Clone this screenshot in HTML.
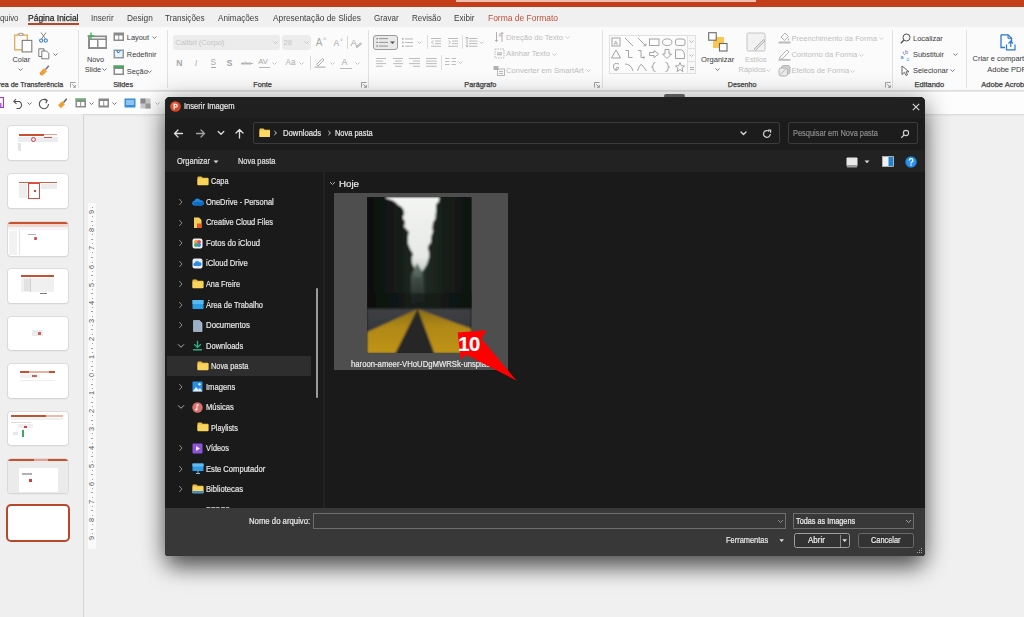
<!DOCTYPE html>
<html><head><meta charset="utf-8"><style>
*{margin:0;padding:0;box-sizing:border-box}
html,body{width:1024px;height:617px;overflow:hidden;background:#f0f0f0;font-family:"Liberation Sans",sans-serif;position:relative}
.a{position:absolute}
.t{position:absolute;white-space:nowrap}
</style></head><body>
<div class="a" style="left:0px;top:0px;width:1024px;height:7px;background:#c43e1c;"></div>
<div class="a" style="left:456px;top:0px;width:300px;height:2px;background:#efc0ae;"></div>
<div class="a" style="left:0px;top:7px;width:1024px;height:20px;background:#f0f0f0;"></div>
<div class="t" id="q0" style="left:0px;top:12.70px;height:10px;line-height:10px;font-size:8.6px;color:#3c3c3c;transform:scaleX(0.8906);transform-origin:0 0;">quivo</div>
<div class="t" id="q1" style="left:28.2px;top:12.70px;height:10px;line-height:10px;font-size:8.6px;color:#262626;-webkit-text-stroke:0.25px #262626;transform:scaleX(0.9878);transform-origin:0 0;">Página Inicial</div>
<div class="t" id="q2" style="left:91.4px;top:12.70px;height:10px;line-height:10px;font-size:8.6px;color:#3c3c3c;transform:scaleX(0.9460);transform-origin:0 0;">Inserir</div>
<div class="t" id="q3" style="left:127px;top:12.70px;height:10px;line-height:10px;font-size:8.6px;color:#3c3c3c;transform:scaleX(0.9639);transform-origin:0 0;">Design</div>
<div class="t" id="q4" style="left:165.4px;top:12.70px;height:10px;line-height:10px;font-size:8.6px;color:#3c3c3c;transform:scaleX(0.9492);transform-origin:0 0;">Transições</div>
<div class="t" id="q5" style="left:218px;top:12.70px;height:10px;line-height:10px;font-size:8.6px;color:#3c3c3c;transform:scaleX(0.9526);transform-origin:0 0;">Animações</div>
<div class="t" id="q6" style="left:273px;top:12.70px;height:10px;line-height:10px;font-size:8.6px;color:#3c3c3c;transform:scaleX(0.9694);transform-origin:0 0;">Apresentação de Slides</div>
<div class="t" id="q7" style="left:374.4px;top:12.70px;height:10px;line-height:10px;font-size:8.6px;color:#3c3c3c;transform:scaleX(0.9366);transform-origin:0 0;">Gravar</div>
<div class="t" id="q8" style="left:412px;top:12.70px;height:10px;line-height:10px;font-size:8.6px;color:#3c3c3c;transform:scaleX(0.9336);transform-origin:0 0;">Revisão</div>
<div class="t" id="q9" style="left:453.7px;top:12.70px;height:10px;line-height:10px;font-size:8.6px;color:#3c3c3c;transform:scaleX(0.9535);transform-origin:0 0;">Exibir</div>
<div class="t" id="q10" style="left:488.2px;top:12.70px;height:10px;line-height:10px;font-size:8.6px;color:#c0503e;transform:scaleX(0.9835);transform-origin:0 0;">Forma de Formato</div>
<div class="a" style="left:27.6px;top:23.2px;width:51.5px;height:1.8px;background:#b8472c;"></div>
<div class="a" style="left:0px;top:27px;width:1024px;height:63px;background:#fbfbfb;"></div>
<div class="a" style="left:0px;top:89.5px;width:1024px;height:2.5px;background:linear-gradient(#d6d6d6,#ededed);"></div>
<div class="a" style="left:0px;top:92px;width:1024px;height:22px;background:#fdfdfd;"></div>
<div class="a" style="left:0px;top:114px;width:1024px;height:1px;background:#dcdcdc;"></div>
<div class="a" style="left:0px;top:115px;width:1024px;height:2px;background:linear-gradient(#e8e8e8,#efefef);"></div>
<div class="a" style="left:77.8px;top:30px;width:1px;height:58px;background:#e1e1e1;"></div>
<div class="a" style="left:167.1px;top:30px;width:1px;height:58px;background:#e1e1e1;"></div>
<div class="a" style="left:368px;top:30px;width:1px;height:58px;background:#e1e1e1;"></div>
<div class="a" style="left:601.8px;top:30px;width:1px;height:58px;background:#e1e1e1;"></div>
<div class="a" style="left:892px;top:30px;width:1px;height:58px;background:#e1e1e1;"></div>
<div class="a" style="left:965.8px;top:30px;width:1px;height:58px;background:#e1e1e1;"></div>
<svg class="a" style="left:13px;top:32px;" width="20" height="21" viewBox="0 0 20 21"><path d="M1.7 3.2H5V2H10.5V3.2H14.3V17.8H1.7Z" fill="none" stroke="#e0a848" stroke-width="1.2"/><path d="M6.2 1.3h3.2v2.2H6.2Z" fill="#fff" stroke="#8f8f8f" stroke-width="0.8"/><rect x="9.2" y="8.4" width="9.6" height="11.5" fill="#fff" stroke="#7c7c7c" stroke-width="1.1"/></svg>
<div class="t" id="q11" style="left:12.5px;top:55.10px;height:10px;line-height:10px;font-size:7.4px;color:#3a3a3a;">Colar</div>
<svg class="a" style="left:18.0px;top:68.0px;" width="5" height="3" viewBox="0 0 5 3"><path d="M0.5 0.5L2.5 2.5L4.5 0.5" stroke="#6a6a6a" stroke-width="0.9" fill="none"/></svg>
<svg class="a" style="left:39px;top:32px;" width="9" height="11" viewBox="0 0 9 11"><path d="M2 0.5L6.5 7M7 0.5L2.5 7" stroke="#7a7a7a" stroke-width="0.9"/><circle cx="2.2" cy="8.6" r="1.6" fill="none" stroke="#3a86c8" stroke-width="1.1"/><circle cx="6.8" cy="8.6" r="1.6" fill="none" stroke="#3a86c8" stroke-width="1.1"/></svg>
<svg class="a" style="left:37.5px;top:48px;" width="12" height="11.5" viewBox="0 0 12 11.5"><path d="M0.8 0.8H6V8.5H0.8Z" fill="#fff" stroke="#6c6c6c" stroke-width="0.9"/><path d="M3.8 3H8.5L10.8 5.3V10.8H3.8Z" fill="#fff" stroke="#6c6c6c" stroke-width="0.9"/></svg>
<svg class="a" style="left:53.1px;top:52.5px;" width="5" height="3" viewBox="0 0 5 3"><path d="M0.5 0.5L2.5 2.5L4.5 0.5" stroke="#6a6a6a" stroke-width="0.9" fill="none"/></svg>
<svg class="a" style="left:38.5px;top:64.5px;" width="11" height="11" viewBox="0 0 11 11"><path d="M6.5 4.5L9.8 0.8" stroke="#7a6a9a" stroke-width="1.6"/><path d="M1 7.2L5 3.2L8 6.2L4 10.2Z" fill="#f0a030"/><path d="M1 7.2L4 10.2L2.3 10.6L0.6 8.8Z" fill="#d88a20"/></svg>
<div class="t" id="q12" style="left:-1.5px;top:80.10px;height:10px;line-height:10px;font-size:7.05px;color:#404040;-webkit-text-stroke:0.25px #404040;">rea de Transferência</div>
<svg class="a" style="left:69.8px;top:81.5px;" width="6" height="6" viewBox="0 0 6 6"><path d="M0.5 5.5V0.5H5.5" stroke="#8a8a8a" stroke-width="0.8" fill="none"/><path d="M2.2 2.2L5.3 5.3M5.3 3V5.3H3" stroke="#8a8a8a" stroke-width="0.8" fill="none"/></svg>
<svg class="a" style="left:85.5px;top:31.5px;" width="22" height="18" viewBox="0 0 22 18"><rect x="2" y="3.5" width="19" height="13.5" fill="#8c8c8c"/><rect x="4" y="8" width="7" height="7" fill="#fff"/><rect x="12.5" y="8" width="7" height="7" fill="#fff"/><rect x="3.8" y="5" width="15.5" height="1.6" fill="#e8e8e8"/><path d="M5 0.5V7M1.5 3.8H8.5" stroke="#3cae5a" stroke-width="1.3"/></svg>
<div class="t" id="q13" style="left:86.9px;top:54.50px;height:10px;line-height:10px;font-size:7.4px;color:#3a3a3a;">Novo</div>
<div class="t" id="q14" style="left:84.8px;top:64.80px;height:10px;line-height:10px;font-size:7.4px;color:#3a3a3a;">Slide</div>
<svg class="a" style="left:102.0px;top:68.0px;" width="5" height="3" viewBox="0 0 5 3"><path d="M0.5 0.5L2.5 2.5L4.5 0.5" stroke="#6a6a6a" stroke-width="0.9" fill="none"/></svg>
<svg class="a" style="left:113px;top:32px;" width="11.5" height="9.5" viewBox="0 0 11.5 9.5"><rect x="0.5" y="0.5" width="10.5" height="8.5" fill="#8a8a8a"/><rect x="2" y="3.5" width="3.3" height="4" fill="#fff"/><rect x="6.2" y="3.5" width="3.3" height="4" fill="#fff"/></svg>
<div class="t" id="q15" style="left:126.8px;top:33.20px;height:10px;line-height:10px;font-size:7.4px;color:#3a3a3a;">Layout</div>
<svg class="a" style="left:151.5px;top:36.2px;" width="5" height="3" viewBox="0 0 5 3"><path d="M0.5 0.5L2.5 2.5L4.5 0.5" stroke="#6a6a6a" stroke-width="0.9" fill="none"/></svg>
<svg class="a" style="left:113px;top:48.5px;" width="11.5" height="10" viewBox="0 0 11.5 10"><rect x="0.5" y="0.5" width="10.5" height="9" fill="#8f9aa4"/><rect x="2" y="2" width="7.5" height="6" fill="#e8f0f8"/><path d="M3.5 1L5 4L7.5 2" stroke="#2a7ac8" stroke-width="1" fill="none"/></svg>
<div class="t" id="q16" style="left:126.8px;top:49.80px;height:10px;line-height:10px;font-size:7.4px;color:#3a3a3a;">Redefinir</div>
<svg class="a" style="left:113px;top:65px;" width="11.5" height="10.5" viewBox="0 0 11.5 10.5"><rect x="0.5" y="0.5" width="10.5" height="9.5" fill="#8a8a8a"/><rect x="0.5" y="0.5" width="10.5" height="2.5" fill="#4aa860"/><rect x="2" y="4" width="7.5" height="4.5" fill="#fff"/></svg>
<div class="t" id="q17" style="left:126.8px;top:66.50px;height:10px;line-height:10px;font-size:7.4px;color:#3a3a3a;">Seção</div>
<svg class="a" style="left:147.0px;top:69.5px;" width="5" height="3" viewBox="0 0 5 3"><path d="M0.5 0.5L2.5 2.5L4.5 0.5" stroke="#6a6a6a" stroke-width="0.9" fill="none"/></svg>
<div class="t" id="q18" style="left:113.2px;top:80.10px;height:10px;line-height:10px;font-size:7.3px;color:#404040;-webkit-text-stroke:0.25px #404040;">Slides</div>
<div class="a" style="left:172.8px;top:34.8px;width:107px;height:14.8px;background:#ececec;border-radius:3px"></div>
<div class="t" id="q19" style="left:175.3px;top:37.90px;height:10px;line-height:10px;font-size:7.55px;color:#c4c4c4;">Calibri (Corpo)</div>
<svg class="a" style="left:273.2px;top:40.9px;" width="5" height="3" viewBox="0 0 5 3"><path d="M0.5 0.5L2.5 2.5L4.5 0.5" stroke="#c0c0c0" stroke-width="0.9" fill="none"/></svg>
<div class="a" style="left:282.3px;top:34.8px;width:28.7px;height:14.8px;background:#ececec;border-radius:3px"></div>
<div class="t" id="q20" style="left:283.5px;top:37.90px;height:10px;line-height:10px;font-size:7.5px;color:#c4c4c4;">28</div>
<svg class="a" style="left:304.0px;top:40.9px;" width="5" height="3" viewBox="0 0 5 3"><path d="M0.5 0.5L2.5 2.5L4.5 0.5" stroke="#c0c0c0" stroke-width="0.9" fill="none"/></svg>
<div class="t" id="q21" style="left:315.7px;top:37.50px;height:10px;line-height:10px;font-size:10px;color:#a8a8a8;">A</div>
<div class="t" id="q22" style="left:323px;top:34.00px;height:10px;line-height:10px;font-size:6px;color:#a8a8a8;">˄</div>
<div class="t" id="q23" style="left:333.6px;top:38.10px;height:10px;line-height:10px;font-size:8.5px;color:#a8a8a8;">A</div>
<div class="t" id="q24" style="left:340px;top:34.80px;height:10px;line-height:10px;font-size:5px;color:#a8a8a8;">˅</div>
<div class="a" style="left:346.5px;top:36px;width:1px;height:12.5px;background:#d8d8d8;"></div>
<div class="t" id="q25" style="left:350.6px;top:37.80px;height:10px;line-height:10px;font-size:9.5px;color:#a8a8a8;">A</div>
<svg class="a" style="left:355px;top:42px;" width="7" height="6" viewBox="0 0 7 6"><path d="M1 5L5.5 0.8L6.5 2L2.2 5.5Z" fill="#d8d8d8" stroke="#a8a8a8" stroke-width="0.8"/></svg>
<div class="t" id="q26" style="left:176.3px;top:58.40px;height:10px;line-height:10px;font-size:8.6px;color:#a6a6a6;font-weight:bold">N</div>
<div class="t" id="q27" style="left:194.7px;top:58.40px;height:10px;line-height:10px;font-size:8.6px;color:#b0b0b0;font-style:italic">I</div>
<div class="t" id="q28" style="left:210.5px;top:58.00px;height:10px;line-height:10px;font-size:8.2px;color:#a8a8a8;">S</div>
<div class="a" style="left:210.5px;top:67.2px;width:5.5px;height:0.8px;background:#a8a8a8;"></div>
<div class="t" id="q29" style="left:226.5px;top:58.40px;height:10px;line-height:10px;font-size:8.8px;color:#a0a0a0;font-weight:bold">S</div>
<div class="t" id="q30" style="left:241.3px;top:58.40px;height:10px;line-height:10px;font-size:6px;color:#b4b4b4;">abc</div>
<div class="a" style="left:241px;top:62.8px;width:11.5px;height:0.9px;background:#b4b4b4;"></div>
<div class="t" id="q31" style="left:258.3px;top:57.00px;height:10px;line-height:10px;font-size:7.6px;color:#a8a8a8;">AV</div>
<div class="a" style="left:258.5px;top:66.5px;width:11px;height:0.7px;background:#b8b8b8;"></div>
<svg class="a" style="left:272.2px;top:61.5px;" width="5" height="3" viewBox="0 0 5 3"><path d="M0.5 0.5L2.5 2.5L4.5 0.5" stroke="#bdbdbd" stroke-width="0.9" fill="none"/></svg>
<div class="t" id="q32" style="left:285.6px;top:58.40px;height:10px;line-height:10px;font-size:8.2px;color:#adadad;">Aa</div>
<svg class="a" style="left:298.9px;top:61.5px;" width="5" height="3" viewBox="0 0 5 3"><path d="M0.5 0.5L2.5 2.5L4.5 0.5" stroke="#bdbdbd" stroke-width="0.9" fill="none"/></svg>
<div class="a" style="left:310.2px;top:56px;width:1px;height:14px;background:#d8d8d8;"></div>
<svg class="a" style="left:314.3px;top:57px;" width="12" height="11" viewBox="0 0 12 11"><path d="M2.5 7.5L8.5 1.5L10 3L4 9Z" fill="none" stroke="#a0a0a0" stroke-width="0.9"/><rect x="0.5" y="9.5" width="11" height="1.3" fill="#b8b8b8"/></svg>
<svg class="a" style="left:329.6px;top:61.5px;" width="5" height="3" viewBox="0 0 5 3"><path d="M0.5 0.5L2.5 2.5L4.5 0.5" stroke="#bdbdbd" stroke-width="0.9" fill="none"/></svg>
<div class="t" id="q33" style="left:341.5px;top:57.30px;height:10px;line-height:10px;font-size:8.8px;color:#a6a6a6;">A</div>
<div class="a" style="left:340.3px;top:67.8px;width:11.3px;height:1.6px;background:#b8b8b8;"></div>
<svg class="a" style="left:355.3px;top:61.5px;" width="5" height="3" viewBox="0 0 5 3"><path d="M0.5 0.5L2.5 2.5L4.5 0.5" stroke="#bdbdbd" stroke-width="0.9" fill="none"/></svg>
<div class="t" id="q34" style="left:253.2px;top:80.40px;height:10px;line-height:10px;font-size:7.3px;color:#404040;-webkit-text-stroke:0.25px #404040;">Fonte</div>
<svg class="a" style="left:360.9px;top:81.8px;" width="6" height="6" viewBox="0 0 6 6"><path d="M0.5 5.5V0.5H5.5" stroke="#8a8a8a" stroke-width="0.8" fill="none"/><path d="M2.2 2.2L5.3 5.3M5.3 3V5.3H3" stroke="#8a8a8a" stroke-width="0.8" fill="none"/></svg>
<div class="a" style="left:373.4px;top:34.6px;width:25.1px;height:15.5px;background:#e9e9e9;border:1.3px solid #9c9c9c;border-radius:3px"></div>
<svg class="a" style="left:376px;top:37px;" width="20" height="11" viewBox="0 0 20 11"><g fill="#707070"><rect x="0.5" y="1" width="1.3" height="1.3"/><rect x="0.5" y="4.7" width="1.3" height="1.3"/><rect x="0.5" y="8.4" width="1.3" height="1.3"/></g><g fill="#8a8a8a"><rect x="3" y="1.2" width="9" height="0.9"/><rect x="3" y="4.9" width="9" height="0.9"/><rect x="3" y="8.6" width="9" height="0.9"/></g><path d="M14 4.5H19L16.5 7Z" fill="#505050"/></svg>
<svg class="a" style="left:402px;top:36.5px;" width="11" height="11" viewBox="0 0 11 11"><g fill="#b0b0b0"><rect x="0" y="1" width="1.5" height="1.8"/><rect x="0" y="4.6" width="1.5" height="1.8"/><rect x="0" y="8.2" width="1.5" height="1.8"/><rect x="3" y="1.5" width="8" height="0.9"/><rect x="3" y="5.1" width="8" height="0.9"/><rect x="3" y="8.7" width="8" height="0.9"/></g></svg>
<svg class="a" style="left:417.0px;top:40.5px;" width="5" height="3" viewBox="0 0 5 3"><path d="M0.5 0.5L2.5 2.5L4.5 0.5" stroke="#bdbdbd" stroke-width="0.9" fill="none"/></svg>
<div class="a" style="left:426.7px;top:35px;width:1px;height:14px;background:#dcdcdc;"></div>
<svg class="a" style="left:430.8px;top:36.5px;" width="10.5" height="11" viewBox="0 0 10.5 11"><rect x="0" y="1.0" width="10.5" height="0.9" fill="#b5b5b5"/><rect x="4" y="3.6" width="6.5" height="0.9" fill="#b5b5b5"/><rect x="4" y="6.2" width="6.5" height="0.9" fill="#b5b5b5"/><rect x="0" y="8.8" width="10.5" height="0.9" fill="#b5b5b5"/></svg>
<svg class="a" style="left:430.8px;top:39.5px;" width="3" height="5" viewBox="0 0 3 5"><path d="M2.5 0.5L0.5 2.3L2.5 4" stroke="#a8a8a8" stroke-width="0.8" fill="none"/></svg>
<svg class="a" style="left:447.5px;top:36.5px;" width="10.5" height="11" viewBox="0 0 10.5 11"><rect x="0" y="1.0" width="10.5" height="0.9" fill="#b5b5b5"/><rect x="4" y="3.6" width="6.5" height="0.9" fill="#b5b5b5"/><rect x="4" y="6.2" width="6.5" height="0.9" fill="#b5b5b5"/><rect x="0" y="8.8" width="10.5" height="0.9" fill="#b5b5b5"/></svg>
<svg class="a" style="left:447.5px;top:39.5px;" width="3" height="5" viewBox="0 0 3 5"><path d="M0.5 0.5L2.5 2.3L0.5 4" stroke="#a8a8a8" stroke-width="0.8" fill="none"/></svg>
<div class="a" style="left:461.9px;top:35px;width:1px;height:14px;background:#dcdcdc;"></div>
<svg class="a" style="left:469px;top:36.5px;" width="8.5" height="11" viewBox="0 0 8.5 11"><rect x="0" y="1.0" width="8.5" height="0.9" fill="#b5b5b5"/><rect x="0" y="3.6" width="8.5" height="0.9" fill="#b5b5b5"/><rect x="0" y="6.2" width="8.5" height="0.9" fill="#b5b5b5"/><rect x="0" y="8.8" width="8.5" height="0.9" fill="#b5b5b5"/></svg>
<svg class="a" style="left:465px;top:36px;" width="4" height="12" viewBox="0 0 4 12"><path d="M2 1V11M0.5 2.5L2 1L3.5 2.5M0.5 9.5L2 11L3.5 9.5" stroke="#a8a8a8" stroke-width="0.8" fill="none"/></svg>
<svg class="a" style="left:479.2px;top:40.5px;" width="5" height="3" viewBox="0 0 5 3"><path d="M0.5 0.5L2.5 2.5L4.5 0.5" stroke="#bdbdbd" stroke-width="0.9" fill="none"/></svg>
<svg class="a" style="left:375.8px;top:56.8px;" width="10.7" height="11" viewBox="0 0 10.7 11"><rect x="0" y="1.0" width="10.7" height="0.9" fill="#b5b5b5"/><rect x="0" y="3.6" width="7" height="0.9" fill="#b5b5b5"/><rect x="0" y="6.2" width="10.7" height="0.9" fill="#b5b5b5"/><rect x="0" y="8.8" width="7" height="0.9" fill="#b5b5b5"/></svg>
<svg class="a" style="left:392.5px;top:56.8px;" width="10.8" height="11" viewBox="0 0 10.8 11"><rect x="0" y="1.0" width="10.8" height="0.9" fill="#b5b5b5"/><rect x="2" y="3.6" width="6.800000000000001" height="0.9" fill="#b5b5b5"/><rect x="0" y="6.2" width="10.8" height="0.9" fill="#b5b5b5"/><rect x="2" y="8.8" width="6.800000000000001" height="0.9" fill="#b5b5b5"/></svg>
<svg class="a" style="left:409.3px;top:56.8px;" width="11.2" height="11" viewBox="0 0 11.2 11"><rect x="0" y="1.0" width="11.2" height="0.9" fill="#b5b5b5"/><rect x="4" y="3.6" width="7.199999999999999" height="0.9" fill="#b5b5b5"/><rect x="0" y="6.2" width="11.2" height="0.9" fill="#b5b5b5"/><rect x="4" y="8.8" width="7.199999999999999" height="0.9" fill="#b5b5b5"/></svg>
<svg class="a" style="left:426px;top:56.8px;" width="10.8" height="11" viewBox="0 0 10.8 11"><rect x="0" y="1.0" width="10.8" height="0.9" fill="#b5b5b5"/><rect x="0" y="3.6" width="10.8" height="0.9" fill="#b5b5b5"/><rect x="0" y="6.2" width="10.8" height="0.9" fill="#b5b5b5"/><rect x="0" y="8.8" width="10.8" height="0.9" fill="#b5b5b5"/></svg>
<div class="a" style="left:441px;top:55px;width:1px;height:15px;background:#dcdcdc;"></div>
<svg class="a" style="left:445px;top:57px;" width="11" height="10" viewBox="0 0 11 10"><g fill="#b8b8b8"><rect x="0" y="1" width="4.5" height="0.9"/><rect x="0" y="4" width="4.5" height="0.9"/><rect x="0" y="7" width="4.5" height="0.9"/><rect x="6.5" y="1" width="4.5" height="0.9"/><rect x="6.5" y="4" width="4.5" height="0.9"/><rect x="6.5" y="7" width="4.5" height="0.9"/></g></svg>
<svg class="a" style="left:458.2px;top:60.5px;" width="5" height="3" viewBox="0 0 5 3"><path d="M0.5 0.5L2.5 2.5L4.5 0.5" stroke="#bdbdbd" stroke-width="0.9" fill="none"/></svg>
<svg class="a" style="left:493.5px;top:31px;" width="11" height="12" viewBox="0 0 11 12"><path d="M2.5 1V10.5M1 9L2.5 10.5L4 9" stroke="#a8a8a8" stroke-width="0.9" fill="none"/><path d="M8 11V1.5M6.5 3L8 1.5L9.5 3" stroke="#a8a8a8" stroke-width="0.9" fill="none"/><text x="4.6" y="6" font-size="5" fill="#a8a8a8" font-family="Liberation Sans">A</text></svg>
<div class="t" id="q35" style="left:506.1px;top:32.50px;height:10px;line-height:10px;font-size:7.6px;color:#bcbcbc;">Direção do Texto</div>
<svg class="a" style="left:564.5px;top:35.8px;" width="5" height="3" viewBox="0 0 5 3"><path d="M0.5 0.5L2.5 2.5L4.5 0.5" stroke="#c4c4c4" stroke-width="0.9" fill="none"/></svg>
<svg class="a" style="left:494px;top:48px;" width="11" height="11" viewBox="0 0 11 11"><rect x="1" y="1" width="9" height="9" fill="none" stroke="#a8a8a8" stroke-width="0.8" stroke-dasharray="1.5 1"/><rect x="3" y="4.5" width="5" height="0.9" fill="#a0a0a0"/><rect x="3" y="6.3" width="5" height="0.9" fill="#a0a0a0"/></svg>
<div class="t" id="q36" style="left:506.1px;top:49.20px;height:10px;line-height:10px;font-size:7.6px;color:#bcbcbc;">Alinhar Texto</div>
<svg class="a" style="left:551.5px;top:52.5px;" width="5" height="3" viewBox="0 0 5 3"><path d="M0.5 0.5L2.5 2.5L4.5 0.5" stroke="#c4c4c4" stroke-width="0.9" fill="none"/></svg>
<svg class="a" style="left:493px;top:64.5px;" width="12" height="11" viewBox="0 0 12 11"><rect x="0.5" y="1" width="5" height="4" fill="#b0b0b0"/><rect x="4.5" y="4" width="7" height="6.5" fill="none" stroke="#a8a8a8" stroke-width="0.8"/><rect x="6" y="6" width="4" height="0.8" fill="#a8a8a8"/><rect x="6" y="8" width="4" height="0.8" fill="#a8a8a8"/></svg>
<div class="t" id="q37" style="left:506.1px;top:66.00px;height:10px;line-height:10px;font-size:7.55px;color:#bcbcbc;">Converter em SmartArt</div>
<svg class="a" style="left:586.2px;top:69.3px;" width="5" height="3" viewBox="0 0 5 3"><path d="M0.5 0.5L2.5 2.5L4.5 0.5" stroke="#c4c4c4" stroke-width="0.9" fill="none"/></svg>
<div class="t" id="q38" style="left:464.3px;top:79.80px;height:10px;line-height:10px;font-size:7.3px;color:#404040;-webkit-text-stroke:0.25px #404040;">Parágrafo</div>
<svg class="a" style="left:593.5px;top:81.5px;" width="6" height="6" viewBox="0 0 6 6"><path d="M0.5 5.5V0.5H5.5" stroke="#8a8a8a" stroke-width="0.8" fill="none"/><path d="M2.2 2.2L5.3 5.3M5.3 3V5.3H3" stroke="#8a8a8a" stroke-width="0.8" fill="none"/></svg>
<div class="a" style="left:608.6px;top:34.7px;width:87.6px;height:39.7px;background:#fcfcfc;border:1px solid #e0e0e0"></div>
<div class="a" style="left:687px;top:34.7px;width:9.2px;height:39.7px;background:#f8f8f8;border:1px solid #e0e0e0"></div>
<div class="a" style="left:687px;top:47.9px;width:9.2px;height:1px;background:#e0e0e0;"></div>
<div class="a" style="left:687px;top:61.2px;width:9.2px;height:1px;background:#e0e0e0;"></div>
<svg class="a" style="left:689.1px;top:40.0px;" width="5" height="3" viewBox="0 0 5 3"><path d="M0.5 0.5L2.5 2.5L4.5 0.5" stroke="#b0b0b0" stroke-width="0.9" fill="none"/></svg>
<svg class="a" style="left:689.1px;top:53.5px;" width="5" height="3" viewBox="0 0 5 3"><path d="M0.5 0.5L2.5 2.5L4.5 0.5" stroke="#b0b0b0" stroke-width="0.9" fill="none"/></svg>
<div class="a" style="left:689.5px;top:66.5px;width:4.2px;height:0.8px;background:#b0b0b0;"></div>
<div class="a" style="left:689.5px;top:68.5px;width:4.2px;height:0.8px;background:#b0b0b0;"></div>
<svg class="a" style="left:611.0px;top:36.5px;" width="10.5" height="10.5" viewBox="0 0 10.5 10.5"><rect x="1" y="1" width="8" height="8" stroke="#9a9a9a" stroke-width="0.9" fill="none"/><text x="2.8" y="7.5" font-size="6" fill="#8a8a8a" font-family="Liberation Sans">A</text></svg>
<svg class="a" style="left:623.8px;top:36.5px;" width="10.5" height="10.5" viewBox="0 0 10.5 10.5"><path d="M1 1L9 9" stroke="#9a9a9a" stroke-width="0.9" fill="none"/></svg>
<svg class="a" style="left:636.6px;top:36.5px;" width="10.5" height="10.5" viewBox="0 0 10.5 10.5"><path d="M1 1L8.5 8.5" stroke="#9a9a9a" stroke-width="0.9" fill="none"/><path d="M6.5 8.8H8.8V6.5" stroke="#9a9a9a" stroke-width="0.9" fill="none"/></svg>
<svg class="a" style="left:649.4px;top:36.5px;" width="10.5" height="10.5" viewBox="0 0 10.5 10.5"><rect x="0.5" y="2" width="9.5" height="6.5" stroke="#9a9a9a" stroke-width="0.9" fill="none"/></svg>
<svg class="a" style="left:662.2px;top:36.5px;" width="10.5" height="10.5" viewBox="0 0 10.5 10.5"><ellipse cx="5.2" cy="5.2" rx="4.7" ry="3.3" stroke="#9a9a9a" stroke-width="0.9" fill="none"/></svg>
<svg class="a" style="left:675.0px;top:36.5px;" width="10.5" height="10.5" viewBox="0 0 10.5 10.5"><rect x="0.5" y="2" width="9.5" height="6.5" rx="2" stroke="#9a9a9a" stroke-width="0.9" fill="none"/></svg>
<svg class="a" style="left:611.0px;top:49.1px;" width="10.5" height="10.5" viewBox="0 0 10.5 10.5"><path d="M5 1L9.5 9H0.5Z" stroke="#9a9a9a" stroke-width="0.9" fill="none"/></svg>
<svg class="a" style="left:623.8px;top:49.1px;" width="10.5" height="10.5" viewBox="0 0 10.5 10.5"><path d="M1.5 1.5H4.5V8.5H8.5" stroke="#9a9a9a" stroke-width="0.9" fill="none"/></svg>
<svg class="a" style="left:636.6px;top:49.1px;" width="10.5" height="10.5" viewBox="0 0 10.5 10.5"><path d="M1 1.5H4V8.5H7.5M6.5 7.3L7.8 8.5L6.5 9.7" stroke="#9a9a9a" stroke-width="0.9" fill="none"/></svg>
<svg class="a" style="left:649.4px;top:49.1px;" width="10.5" height="10.5" viewBox="0 0 10.5 10.5"><path d="M0.5 3.5H5V1.5L9.5 5L5 8.5V6.5H0.5Z" stroke="#9a9a9a" stroke-width="0.9" fill="none"/></svg>
<svg class="a" style="left:662.2px;top:49.1px;" width="10.5" height="10.5" viewBox="0 0 10.5 10.5"><path d="M3 0.5H7V5H9.5L5 9.5L0.5 5H3Z" stroke="#9a9a9a" stroke-width="0.9" fill="none"/></svg>
<svg class="a" style="left:675.0px;top:49.1px;" width="10.5" height="10.5" viewBox="0 0 10.5 10.5"><path d="M0.5 0.8H6.5Q10 2 9.5 9.5H0.5Z" stroke="#9a9a9a" stroke-width="0.9" fill="none"/></svg>
<svg class="a" style="left:611.0px;top:61.7px;" width="10.5" height="10.5" viewBox="0 0 10.5 10.5"><path d="M8 2Q2 0 2.5 5Q3 9 6 8Q9 7 7 5Q4 5 5 9" stroke="#9a9a9a" stroke-width="0.9" fill="none"/></svg>
<svg class="a" style="left:623.8px;top:61.7px;" width="10.5" height="10.5" viewBox="0 0 10.5 10.5"><path d="M1 2Q7 2 9 9" stroke="#9a9a9a" stroke-width="0.9" fill="none"/></svg>
<svg class="a" style="left:636.6px;top:61.7px;" width="10.5" height="10.5" viewBox="0 0 10.5 10.5"><path d="M0.5 9Q3 1 5 3Q7 5 9.5 9" stroke="#9a9a9a" stroke-width="0.9" fill="none"/></svg>
<svg class="a" style="left:649.4px;top:61.7px;" width="10.5" height="10.5" viewBox="0 0 10.5 10.5"><path d="M6.5 0.5Q4 0.5 4 3V4Q4 5 2.5 5Q4 5 4 6V7Q4 9.5 6.5 9.5" stroke="#9a9a9a" stroke-width="0.9" fill="none"/></svg>
<svg class="a" style="left:662.2px;top:61.7px;" width="10.5" height="10.5" viewBox="0 0 10.5 10.5"><path d="M3.5 0.5Q6 0.5 6 3V4Q6 5 7.5 5Q6 5 6 6V7Q6 9.5 3.5 9.5" stroke="#9a9a9a" stroke-width="0.9" fill="none"/></svg>
<svg class="a" style="left:675.0px;top:61.7px;" width="10.5" height="10.5" viewBox="0 0 10.5 10.5"><path d="M5 0.5L6.3 3.7L9.7 3.9L7.1 6.1L8 9.5L5 7.6L2 9.5L2.9 6.1L0.3 3.9L3.7 3.7Z" stroke="#9a9a9a" stroke-width="0.9" fill="none"/></svg>
<svg class="a" style="left:708px;top:32px;" width="20" height="20" viewBox="0 0 20 20"><rect x="5" y="5" width="11" height="11" fill="#f8c850"/><rect x="0.7" y="0.7" width="7.5" height="7.5" fill="#fff" stroke="#6a6a6a" stroke-width="1.1"/><rect x="11.5" y="11.5" width="7.5" height="7.5" fill="#fff" stroke="#6a6a6a" stroke-width="1.1"/></svg>
<div class="t" id="q39" style="left:701px;top:54.50px;height:10px;line-height:10px;font-size:7.6px;color:#3a3a3a;">Organizar</div>
<svg class="a" style="left:715.0px;top:67.7px;" width="5" height="3" viewBox="0 0 5 3"><path d="M0.5 0.5L2.5 2.5L4.5 0.5" stroke="#6a6a6a" stroke-width="0.9" fill="none"/></svg>
<svg class="a" style="left:745.5px;top:32px;" width="21" height="21" viewBox="0 0 21 21"><rect x="1" y="1" width="18" height="18" rx="1.5" fill="#f2f2f2" stroke="#c4c4c4" stroke-width="1"/><path d="M8 17L17.5 7.5L19 9L9.5 18.5Z" fill="#ddd" stroke="#aaa" stroke-width="0.8"/></svg>
<div class="t" id="q40" style="left:745px;top:54.90px;height:10px;line-height:10px;font-size:7.4px;color:#c0c0c0;">Estilos</div>
<div class="t" id="q41" style="left:738.6px;top:65.20px;height:10px;line-height:10px;font-size:7.4px;color:#c0c0c0;">Rápidos</div>
<svg class="a" style="left:766.0px;top:68.5px;" width="5" height="3" viewBox="0 0 5 3"><path d="M0.5 0.5L2.5 2.5L4.5 0.5" stroke="#c8c8c8" stroke-width="0.9" fill="none"/></svg>
<svg class="a" style="left:778px;top:31px;" width="13" height="13" viewBox="0 0 13 13"><path d="M3 6L7 2L10.5 5.5L6.5 9.5Z" fill="none" stroke="#a8a8a8" stroke-width="0.9"/><path d="M10.5 7Q12 9 10.5 9.5Q9 9 10.5 7Z" fill="#b8b8b8"/><rect x="0.5" y="10.5" width="12" height="2" fill="#bcbcbc"/></svg>
<div class="t" id="q42" style="left:791.4px;top:33.60px;height:10px;line-height:10px;font-size:7.6px;color:#bfbfbf;">Preenchimento da Forma</div>
<svg class="a" style="left:878.5px;top:36.8px;" width="5" height="3" viewBox="0 0 5 3"><path d="M0.5 0.5L2.5 2.5L4.5 0.5" stroke="#c8c8c8" stroke-width="0.9" fill="none"/></svg>
<svg class="a" style="left:778px;top:48px;" width="13" height="13" viewBox="0 0 13 13"><path d="M2 9L9 2L11 4L4 11L1.5 11.5Z" fill="none" stroke="#a8a8a8" stroke-width="0.9"/><rect x="0.5" y="11" width="12" height="1.8" fill="#bcbcbc"/></svg>
<div class="t" id="q43" style="left:791.4px;top:50.30px;height:10px;line-height:10px;font-size:7.6px;color:#bfbfbf;">Contorno da Forma</div>
<svg class="a" style="left:858.5px;top:53.5px;" width="5" height="3" viewBox="0 0 5 3"><path d="M0.5 0.5L2.5 2.5L4.5 0.5" stroke="#c8c8c8" stroke-width="0.9" fill="none"/></svg>
<svg class="a" style="left:778px;top:64px;" width="13" height="13" viewBox="0 0 13 13"><rect x="3.5" y="1.5" width="8.5" height="8.5" rx="2" fill="#d0d0d0" stroke="#a8a8a8" stroke-width="0.8"/><rect x="1" y="4" width="8.5" height="8" rx="2" fill="#eaeaea" stroke="#a8a8a8" stroke-width="0.8"/><path d="M2.5 10L8 5" stroke="#a8a8a8" stroke-width="0.8"/></svg>
<div class="t" id="q44" style="left:791.4px;top:66.20px;height:10px;line-height:10px;font-size:7.6px;color:#bfbfbf;">Efeitos de Forma</div>
<svg class="a" style="left:849.5px;top:69.5px;" width="5" height="3" viewBox="0 0 5 3"><path d="M0.5 0.5L2.5 2.5L4.5 0.5" stroke="#c8c8c8" stroke-width="0.9" fill="none"/></svg>
<div class="t" id="q45" style="left:727.8px;top:80.20px;height:10px;line-height:10px;font-size:7.15px;color:#404040;-webkit-text-stroke:0.25px #404040;">Desenho</div>
<svg class="a" style="left:884.8px;top:81.5px;" width="6" height="6" viewBox="0 0 6 6"><path d="M0.5 5.5V0.5H5.5" stroke="#8a8a8a" stroke-width="0.8" fill="none"/><path d="M2.2 2.2L5.3 5.3M5.3 3V5.3H3" stroke="#8a8a8a" stroke-width="0.8" fill="none"/></svg>
<svg class="a" style="left:900px;top:32.5px;" width="11" height="11" viewBox="0 0 11 11"><circle cx="6.5" cy="4.5" r="3.5" fill="none" stroke="#505050" stroke-width="1"/><path d="M4 7L0.8 10.2" stroke="#505050" stroke-width="1.3"/></svg>
<div class="t" id="q46" style="left:913px;top:33.50px;height:10px;line-height:10px;font-size:7.45px;color:#3a3a3a;">Localizar</div>
<svg class="a" style="left:900px;top:48.5px;" width="12" height="12" viewBox="0 0 12 12"><text x="5" y="5" font-size="5.5" fill="#8a4ab8" font-family="Liberation Sans">b</text><text x="0.5" y="9.5" font-size="5.5" fill="#2a7ac8" font-family="Liberation Sans">a</text><text x="6.5" y="11.5" font-size="5.5" fill="#2a9ad8" font-family="Liberation Sans">c</text><path d="M3 2.5Q3 5 5 6" stroke="#3a8ad0" stroke-width="0.7" fill="none"/></svg>
<div class="t" id="q47" style="left:913px;top:50.30px;height:10px;line-height:10px;font-size:7.45px;color:#3a3a3a;">Substituir</div>
<svg class="a" style="left:952.5px;top:53.3px;" width="5" height="3" viewBox="0 0 5 3"><path d="M0.5 0.5L2.5 2.5L4.5 0.5" stroke="#6a6a6a" stroke-width="0.9" fill="none"/></svg>
<svg class="a" style="left:901px;top:65px;" width="9" height="11" viewBox="0 0 9 11"><path d="M1 1V9.5L3.3 7.3L5 10.5L6.5 9.8L5 6.8H8Z" fill="#fff" stroke="#555" stroke-width="0.9" stroke-linejoin="round"/></svg>
<div class="t" id="q48" style="left:913px;top:66.20px;height:10px;line-height:10px;font-size:7.45px;color:#3a3a3a;">Selecionar</div>
<svg class="a" style="left:949.5px;top:69.2px;" width="5" height="3" viewBox="0 0 5 3"><path d="M0.5 0.5L2.5 2.5L4.5 0.5" stroke="#6a6a6a" stroke-width="0.9" fill="none"/></svg>
<div class="t" id="q49" style="left:914.6px;top:79.60px;height:10px;line-height:10px;font-size:7.5px;color:#404040;-webkit-text-stroke:0.25px #404040;">Editando</div>
<svg class="a" style="left:998.5px;top:34px;" width="18" height="17" viewBox="0 0 18 17"><path d="M2 0.8H9L12.5 4.3V8" fill="none" stroke="#2a78d6" stroke-width="1.3"/><path d="M2 0.8V13.5H6" fill="none" stroke="#2a78d6" stroke-width="1.3"/><path d="M9 0.8V4.3H12.5" fill="none" stroke="#2a78d6" stroke-width="1"/><path d="M7.5 10.5V15.8H16V10.5" fill="none" stroke="#2a78d6" stroke-width="1.2"/><path d="M11.75 13V7.5M9.5 9.5L11.75 7.2L14 9.5" fill="none" stroke="#2a78d6" stroke-width="1.2"/></svg>
<div class="t" id="q50" style="left:972.5px;top:54.30px;height:10px;line-height:10px;font-size:7.5px;color:#3a3a3a;">Criar e compartilhar</div>
<div class="t" id="q51" style="left:987.3px;top:64.60px;height:10px;line-height:10px;font-size:7.5px;color:#3a3a3a;">Adobe PDF</div>
<div class="t" id="q52" style="left:981.3px;top:79.60px;height:10px;line-height:10px;font-size:7.5px;color:#404040;-webkit-text-stroke:0.25px #404040;">Adobe Acrobat</div>
<svg class="a" style="left:-6px;top:97px;" width="10" height="11" viewBox="0 0 10 11"><rect x="0.5" y="0.5" width="9" height="10" fill="none" stroke="#9a3ad0" stroke-width="1.2"/><rect x="2.5" y="6" width="5" height="4" fill="#b060e0"/></svg>
<svg class="a" style="left:13px;top:97.5px;" width="12" height="11" viewBox="0 0 12 11"><path d="M3 1L0.8 3.5L3.5 5.8" stroke="#505050" stroke-width="1.1" fill="none"/><path d="M1 3.5H6.5A4 4 0 0 1 6.5 10.5H3.5" stroke="#505050" stroke-width="1.1" fill="none"/></svg>
<svg class="a" style="left:26.7px;top:101.9px;" width="5" height="3" viewBox="0 0 5 3"><path d="M0.5 0.5L2.5 2.5L4.5 0.5" stroke="#6a6a6a" stroke-width="0.9" fill="none"/></svg>
<svg class="a" style="left:37.5px;top:97.5px;" width="12" height="12" viewBox="0 0 12 12"><path d="M8.8 2.5A4.6 4.6 0 1 0 10.5 6" stroke="#505050" stroke-width="1.1" fill="none"/><path d="M6.5 0.8L9.2 2.5L7.8 5.2" stroke="#505050" stroke-width="1.1" fill="none"/></svg>
<svg class="a" style="left:57px;top:97.5px;" width="11" height="11" viewBox="0 0 11 11"><path d="M6.5 4.5L9.8 0.8" stroke="#606060" stroke-width="1.5"/><path d="M1 7.2L5 3.2L8 6.2L4 10.2Z" fill="#f0a030"/></svg>
<svg class="a" style="left:75px;top:98px;" width="11.5" height="10" viewBox="0 0 11.5 10"><rect x="0.5" y="0.5" width="10.5" height="9" fill="#8a8a8a"/><rect x="0.5" y="0.5" width="10.5" height="2" fill="#6ab070"/><rect x="2" y="4" width="3.2" height="4" fill="#fff"/><rect x="6.2" y="4" width="3.2" height="4" fill="#fff"/></svg>
<svg class="a" style="left:88.9px;top:101.9px;" width="5" height="3" viewBox="0 0 5 3"><path d="M0.5 0.5L2.5 2.5L4.5 0.5" stroke="#6a6a6a" stroke-width="0.9" fill="none"/></svg>
<svg class="a" style="left:97.7px;top:98px;" width="11.5" height="10" viewBox="0 0 11.5 10"><rect x="0.5" y="0.5" width="10.5" height="9" fill="#888"/><rect x="2" y="3" width="3.3" height="4.5" fill="#fff"/><rect x="6.2" y="3" width="3.3" height="4.5" fill="#fff"/></svg>
<svg class="a" style="left:112.2px;top:101.9px;" width="5" height="3" viewBox="0 0 5 3"><path d="M0.5 0.5L2.5 2.5L4.5 0.5" stroke="#6a6a6a" stroke-width="0.9" fill="none"/></svg>
<svg class="a" style="left:123.5px;top:98px;" width="12" height="10" viewBox="0 0 12 10"><rect x="0.5" y="0.5" width="11" height="9" fill="#3a8ed8"/><rect x="2" y="2" width="8" height="5" fill="#8ec4f0"/></svg>
<svg class="a" style="left:140.4px;top:97.5px;" width="11" height="11" viewBox="0 0 11 11"><rect x="0.5" y="0.5" width="10" height="10" fill="#c8c8c8"/><rect x="0.5" y="0.5" width="5" height="5" fill="#8a8a8a"/><rect x="5.5" y="5.5" width="5" height="5" fill="#9a9a9a"/></svg>
<svg class="a" style="left:154.9px;top:101.9px;" width="5" height="3" viewBox="0 0 5 3"><path d="M0.5 0.5L2.5 2.5L4.5 0.5" stroke="#b0b0b0" stroke-width="0.9" fill="none"/></svg>
<div class="a" style="left:664px;top:93.5px;width:21px;height:4px;background:#6a6a6a;border-radius:2px"></div>
<div class="a" style="left:0px;top:114px;width:83px;height:503px;background:#efefef;"></div>
<div class="a" style="left:83px;top:114px;width:1px;height:503px;background:#d4d4d4;"></div>
<div class="a" style="left:7.6px;top:126.3px;width:60px;height:33.8px;background:#fff;border-radius:3px;box-shadow:0 0 0 0.8px #d6d6d6,0 1px 1.5px rgba(0,0,0,0.12);overflow:hidden"><div class="a" style="left:11px;top:8px;width:25px;height:1.8px;background:#c9502e;"></div><div class="a" style="left:36px;top:8px;width:13px;height:1.2px;background:#e8a090;"></div><div class="a" style="left:10px;top:11px;width:40px;height:5px;background:#ececf0;"></div><div class="a" style="left:23px;top:11px;width:5px;height:5px;background:transparent;border:1.2px solid #d04040;border-radius:50%"></div><div class="a" style="left:10px;top:17px;width:3px;height:8px;background:#e4e4e4;"></div><div class="a" style="left:36px;top:11px;width:8px;height:3px;background:transparent;border-top:1px solid #d05050"></div></div>
<div class="a" style="left:7.6px;top:174.2px;width:60px;height:33.8px;background:#fff;border-radius:3px;box-shadow:0 0 0 0.8px #d6d6d6,0 1px 1.5px rgba(0,0,0,0.12);overflow:hidden"><div class="a" style="left:11px;top:7.5px;width:38px;height:1.5px;background:#d06040;"></div><div class="a" style="left:20px;top:9px;width:12px;height:16px;background:transparent;border:1px solid #d84848"></div><div class="a" style="left:11px;top:10px;width:8px;height:14px;background:#eeeeee;"></div><div class="a" style="left:33px;top:10px;width:16px;height:5px;background:#ececec;"></div><div class="a" style="left:26px;top:16px;width:2px;height:2px;background:#d04040;"></div></div>
<div class="a" style="left:7.6px;top:222px;width:60px;height:33.8px;background:#fff;border-radius:3px;box-shadow:0 0 0 0.8px #d6d6d6,0 1px 1.5px rgba(0,0,0,0.12);overflow:hidden"><div class="a" style="left:0px;top:0px;width:60px;height:2px;background:#c8502e;"></div><div class="a" style="left:0px;top:2px;width:60px;height:3px;background:#f0d8d0;"></div><div class="a" style="left:0px;top:5px;width:60px;height:3px;background:#f4f4f4;"></div><div class="a" style="left:1px;top:9px;width:8px;height:24px;background:#f2f2f2;"></div><div class="a" style="left:11px;top:8px;width:1px;height:25px;background:#e4e4e4;"></div><div class="a" style="left:20px;top:12px;width:8px;height:1px;background:#b0b0b0;"></div><div class="a" style="left:26px;top:15px;width:3px;height:3px;background:#d05050;border-radius:1px"></div></div>
<div class="a" style="left:7.6px;top:269px;width:60px;height:33.8px;background:#fff;border-radius:3px;box-shadow:0 0 0 0.8px #d6d6d6,0 1px 1.5px rgba(0,0,0,0.12);overflow:hidden"><div class="a" style="left:13px;top:6px;width:33px;height:1.8px;background:#c9502e;"></div><div class="a" style="left:13px;top:9px;width:33px;height:14px;background:#f0f0f0;"></div><div class="a" style="left:16px;top:10px;width:6px;height:12px;background:#e2e2e2;"></div><div class="a" style="left:22px;top:9px;width:1px;height:14px;background:#d0d0d0;"></div><div class="a" style="left:32px;top:24px;width:7px;height:1.2px;background:#7a7a7a;"></div></div>
<div class="a" style="left:7.6px;top:316.6px;width:60px;height:33.8px;background:#fff;border-radius:3px;box-shadow:0 0 0 0.8px #d6d6d6,0 1px 1.5px rgba(0,0,0,0.12);overflow:hidden"><div class="a" style="left:24px;top:13px;width:11px;height:6px;background:#ececec;"></div><div class="a" style="left:30px;top:15px;width:3px;height:3px;background:#d06060;"></div></div>
<div class="a" style="left:7.6px;top:364px;width:60px;height:33.8px;background:#fff;border-radius:3px;box-shadow:0 0 0 0.8px #d6d6d6,0 1px 1.5px rgba(0,0,0,0.12);overflow:hidden"><div class="a" style="left:12px;top:7px;width:35px;height:1.6px;background:#c8502e;"></div><div class="a" style="left:21px;top:7px;width:20px;height:1.6px;background:#e8b0a0;"></div><div class="a" style="left:12px;top:10px;width:20px;height:4px;background:#f2f2f2;"></div><div class="a" style="left:24px;top:11px;width:5px;height:2px;background:#d06060;"></div><div class="a" style="left:12px;top:16px;width:35px;height:1px;background:#eeeeee;"></div></div>
<div class="a" style="left:7.6px;top:411.5px;width:60px;height:33.8px;background:#fff;border-radius:3px;box-shadow:0 0 0 0.8px #d6d6d6,0 1px 1.5px rgba(0,0,0,0.12);overflow:hidden"><div class="a" style="left:3px;top:3px;width:52px;height:2.2px;background:#c8502e;"></div><div class="a" style="left:38px;top:3px;width:17px;height:2.2px;background:#f0b8a8;"></div><div class="a" style="left:3px;top:6px;width:52px;height:2px;background:#f0f0f0;"></div><div class="a" style="left:3px;top:10px;width:20px;height:1px;background:#dddddd;"></div><div class="a" style="left:10px;top:12px;width:15px;height:4px;background:#f0f0f0;"></div><div class="a" style="left:16px;top:14px;width:3px;height:2px;background:#d04040;"></div><div class="a" style="left:14px;top:18px;width:2px;height:7px;background:#40a860;"></div><div class="a" style="left:5px;top:20px;width:5px;height:3px;background:#e8e8e8;"></div></div>
<div class="a" style="left:7.6px;top:459px;width:60px;height:33.8px;background:#fff;border-radius:3px;box-shadow:0 0 0 0.8px #d6d6d6,0 1px 1.5px rgba(0,0,0,0.12);overflow:hidden"><div class="a" style="left:0px;top:0px;width:60px;height:34px;background:#ebebeb;"></div><div class="a" style="left:0px;top:0px;width:60px;height:2px;background:#c8502e;"></div><div class="a" style="left:26px;top:0px;width:14px;height:2px;background:#e8a090;"></div><div class="a" style="left:11px;top:9px;width:39px;height:24px;background:#ffffff;"></div><div class="a" style="left:14px;top:14px;width:10px;height:1.5px;background:#b0b0b0;"></div><div class="a" style="left:21px;top:20px;width:3px;height:3px;background:#d04040;"></div></div>
<div class="a" style="left:5.5px;top:504.4px;width:64.5px;height:37.8px;background:#fff;border:2.2px solid #b9472b;border-radius:5px"></div>
<div class="a" style="left:88.2px;top:203px;width:8px;height:346px;background:#fafafa;"></div>
<div class="t" style="left:88.2px;top:207.2px;width:8px;height:10px;line-height:10px;text-align:center;font-size:7.4px;color:#5a5a5a;transform:rotate(-90deg)">9</div>
<div class="a" style="left:91.7px;top:216.275px;width:1px;height:0.9px;background:#a0a0a0;"></div>
<div class="a" style="left:91.10000000000001px;top:220.8px;width:2.2px;height:0.9px;background:#a0a0a0;"></div>
<div class="a" style="left:91.7px;top:225.325px;width:1px;height:0.9px;background:#a0a0a0;"></div>
<div class="t" style="left:88.2px;top:225.29999999999998px;width:8px;height:10px;line-height:10px;text-align:center;font-size:7.4px;color:#5a5a5a;transform:rotate(-90deg)">8</div>
<div class="a" style="left:91.7px;top:234.375px;width:1px;height:0.9px;background:#a0a0a0;"></div>
<div class="a" style="left:91.10000000000001px;top:238.9px;width:2.2px;height:0.9px;background:#a0a0a0;"></div>
<div class="a" style="left:91.7px;top:243.42499999999998px;width:1px;height:0.9px;background:#a0a0a0;"></div>
<div class="t" style="left:88.2px;top:243.39999999999998px;width:8px;height:10px;line-height:10px;text-align:center;font-size:7.4px;color:#5a5a5a;transform:rotate(-90deg)">7</div>
<div class="a" style="left:91.7px;top:252.475px;width:1px;height:0.9px;background:#a0a0a0;"></div>
<div class="a" style="left:91.10000000000001px;top:257.0px;width:2.2px;height:0.9px;background:#a0a0a0;"></div>
<div class="a" style="left:91.7px;top:261.525px;width:1px;height:0.9px;background:#a0a0a0;"></div>
<div class="t" style="left:88.2px;top:261.5px;width:8px;height:10px;line-height:10px;text-align:center;font-size:7.4px;color:#5a5a5a;transform:rotate(-90deg)">6</div>
<div class="a" style="left:91.7px;top:270.575px;width:1px;height:0.9px;background:#a0a0a0;"></div>
<div class="a" style="left:91.10000000000001px;top:275.1px;width:2.2px;height:0.9px;background:#a0a0a0;"></div>
<div class="a" style="left:91.7px;top:279.625px;width:1px;height:0.9px;background:#a0a0a0;"></div>
<div class="t" style="left:88.2px;top:279.6px;width:8px;height:10px;line-height:10px;text-align:center;font-size:7.4px;color:#5a5a5a;transform:rotate(-90deg)">5</div>
<div class="a" style="left:91.7px;top:288.675px;width:1px;height:0.9px;background:#a0a0a0;"></div>
<div class="a" style="left:91.10000000000001px;top:293.20000000000005px;width:2.2px;height:0.9px;background:#a0a0a0;"></div>
<div class="a" style="left:91.7px;top:297.725px;width:1px;height:0.9px;background:#a0a0a0;"></div>
<div class="t" style="left:88.2px;top:297.7px;width:8px;height:10px;line-height:10px;text-align:center;font-size:7.4px;color:#5a5a5a;transform:rotate(-90deg)">4</div>
<div class="a" style="left:91.7px;top:306.775px;width:1px;height:0.9px;background:#a0a0a0;"></div>
<div class="a" style="left:91.10000000000001px;top:311.3px;width:2.2px;height:0.9px;background:#a0a0a0;"></div>
<div class="a" style="left:91.7px;top:315.825px;width:1px;height:0.9px;background:#a0a0a0;"></div>
<div class="t" style="left:88.2px;top:315.8px;width:8px;height:10px;line-height:10px;text-align:center;font-size:7.4px;color:#5a5a5a;transform:rotate(-90deg)">3</div>
<div class="a" style="left:91.7px;top:324.875px;width:1px;height:0.9px;background:#a0a0a0;"></div>
<div class="a" style="left:91.10000000000001px;top:329.40000000000003px;width:2.2px;height:0.9px;background:#a0a0a0;"></div>
<div class="a" style="left:91.7px;top:333.925px;width:1px;height:0.9px;background:#a0a0a0;"></div>
<div class="t" style="left:88.2px;top:333.9px;width:8px;height:10px;line-height:10px;text-align:center;font-size:7.4px;color:#5a5a5a;transform:rotate(-90deg)">2</div>
<div class="a" style="left:91.7px;top:342.97499999999997px;width:1px;height:0.9px;background:#a0a0a0;"></div>
<div class="a" style="left:91.10000000000001px;top:347.5px;width:2.2px;height:0.9px;background:#a0a0a0;"></div>
<div class="a" style="left:91.7px;top:352.025px;width:1px;height:0.9px;background:#a0a0a0;"></div>
<div class="t" style="left:88.2px;top:352.0px;width:8px;height:10px;line-height:10px;text-align:center;font-size:7.4px;color:#5a5a5a;transform:rotate(-90deg)">1</div>
<div class="a" style="left:91.7px;top:361.075px;width:1px;height:0.9px;background:#a0a0a0;"></div>
<div class="a" style="left:91.10000000000001px;top:365.6px;width:2.2px;height:0.9px;background:#a0a0a0;"></div>
<div class="a" style="left:91.7px;top:370.125px;width:1px;height:0.9px;background:#a0a0a0;"></div>
<div class="t" style="left:88.2px;top:370.1px;width:8px;height:10px;line-height:10px;text-align:center;font-size:7.4px;color:#5a5a5a;transform:rotate(-90deg)">0</div>
<div class="a" style="left:91.7px;top:379.175px;width:1px;height:0.9px;background:#a0a0a0;"></div>
<div class="a" style="left:91.10000000000001px;top:383.70000000000005px;width:2.2px;height:0.9px;background:#a0a0a0;"></div>
<div class="a" style="left:91.7px;top:388.225px;width:1px;height:0.9px;background:#a0a0a0;"></div>
<div class="t" style="left:88.2px;top:388.2px;width:8px;height:10px;line-height:10px;text-align:center;font-size:7.4px;color:#5a5a5a;transform:rotate(-90deg)">1</div>
<div class="a" style="left:91.7px;top:397.275px;width:1px;height:0.9px;background:#a0a0a0;"></div>
<div class="a" style="left:91.10000000000001px;top:401.8px;width:2.2px;height:0.9px;background:#a0a0a0;"></div>
<div class="a" style="left:91.7px;top:406.325px;width:1px;height:0.9px;background:#a0a0a0;"></div>
<div class="t" style="left:88.2px;top:406.3px;width:8px;height:10px;line-height:10px;text-align:center;font-size:7.4px;color:#5a5a5a;transform:rotate(-90deg)">2</div>
<div class="a" style="left:91.7px;top:415.375px;width:1px;height:0.9px;background:#a0a0a0;"></div>
<div class="a" style="left:91.10000000000001px;top:419.90000000000003px;width:2.2px;height:0.9px;background:#a0a0a0;"></div>
<div class="a" style="left:91.7px;top:424.425px;width:1px;height:0.9px;background:#a0a0a0;"></div>
<div class="t" style="left:88.2px;top:424.4px;width:8px;height:10px;line-height:10px;text-align:center;font-size:7.4px;color:#5a5a5a;transform:rotate(-90deg)">3</div>
<div class="a" style="left:91.7px;top:433.47499999999997px;width:1px;height:0.9px;background:#a0a0a0;"></div>
<div class="a" style="left:91.10000000000001px;top:438.0px;width:2.2px;height:0.9px;background:#a0a0a0;"></div>
<div class="a" style="left:91.7px;top:442.525px;width:1px;height:0.9px;background:#a0a0a0;"></div>
<div class="t" style="left:88.2px;top:442.5px;width:8px;height:10px;line-height:10px;text-align:center;font-size:7.4px;color:#5a5a5a;transform:rotate(-90deg)">4</div>
<div class="a" style="left:91.7px;top:451.575px;width:1px;height:0.9px;background:#a0a0a0;"></div>
<div class="a" style="left:91.10000000000001px;top:456.1px;width:2.2px;height:0.9px;background:#a0a0a0;"></div>
<div class="a" style="left:91.7px;top:460.625px;width:1px;height:0.9px;background:#a0a0a0;"></div>
<div class="t" style="left:88.2px;top:460.6px;width:8px;height:10px;line-height:10px;text-align:center;font-size:7.4px;color:#5a5a5a;transform:rotate(-90deg)">5</div>
<div class="a" style="left:91.7px;top:469.675px;width:1px;height:0.9px;background:#a0a0a0;"></div>
<div class="a" style="left:91.10000000000001px;top:474.20000000000005px;width:2.2px;height:0.9px;background:#a0a0a0;"></div>
<div class="a" style="left:91.7px;top:478.725px;width:1px;height:0.9px;background:#a0a0a0;"></div>
<div class="t" style="left:88.2px;top:478.7px;width:8px;height:10px;line-height:10px;text-align:center;font-size:7.4px;color:#5a5a5a;transform:rotate(-90deg)">6</div>
<div class="a" style="left:91.7px;top:487.775px;width:1px;height:0.9px;background:#a0a0a0;"></div>
<div class="a" style="left:91.10000000000001px;top:492.3px;width:2.2px;height:0.9px;background:#a0a0a0;"></div>
<div class="a" style="left:91.7px;top:496.825px;width:1px;height:0.9px;background:#a0a0a0;"></div>
<div class="t" style="left:88.2px;top:496.8px;width:8px;height:10px;line-height:10px;text-align:center;font-size:7.4px;color:#5a5a5a;transform:rotate(-90deg)">7</div>
<div class="a" style="left:91.7px;top:505.875px;width:1px;height:0.9px;background:#a0a0a0;"></div>
<div class="a" style="left:91.10000000000001px;top:510.40000000000003px;width:2.2px;height:0.9px;background:#a0a0a0;"></div>
<div class="a" style="left:91.7px;top:514.925px;width:1px;height:0.9px;background:#a0a0a0;"></div>
<div class="t" style="left:88.2px;top:514.9000000000001px;width:8px;height:10px;line-height:10px;text-align:center;font-size:7.4px;color:#5a5a5a;transform:rotate(-90deg)">8</div>
<div class="a" style="left:91.7px;top:523.975px;width:1px;height:0.9px;background:#a0a0a0;"></div>
<div class="a" style="left:91.10000000000001px;top:528.5px;width:2.2px;height:0.9px;background:#a0a0a0;"></div>
<div class="a" style="left:91.7px;top:533.0250000000001px;width:1px;height:0.9px;background:#a0a0a0;"></div>
<div class="t" style="left:88.2px;top:533.0px;width:8px;height:10px;line-height:10px;text-align:center;font-size:7.4px;color:#5a5a5a;transform:rotate(-90deg)">9</div>
<div class="a" style="left:91.7px;top:206.5px;width:1px;height:0.8px;background:#9a9a9a;"></div>
<div class="a" style="left:165px;top:97px;width:760px;height:459px;border-radius:5px 5px 3px 3px;box-shadow:0 14px 22px -3px rgba(0,0,0,0.55),0 2px 24px 2px rgba(0,0,0,0.3)"></div>
<div class="a" style="left:165px;top:97px;width:760px;height:459px;border-radius:5px 5px 3px 3px;overflow:hidden;background:#1c1c1c">
</div>
<div class="a" style="left:165px;top:97px;width:760px;height:53px;background:#1c1c1c;border-radius:5px 5px 0 0"></div>
<div class="a" style="left:165px;top:97px;width:760px;height:21px;background:#202020;border-radius:5px 5px 0 0"></div>
<div class="a" style="left:165px;top:150px;width:760px;height:21.5px;background:#222222;"></div>
<div class="a" style="left:165px;top:171.5px;width:760px;height:336.5px;background:#1a1a1a;"></div>
<svg class="a" style="left:169.5px;top:100.5px;" width="11" height="11" viewBox="0 0 11 11"><circle cx="5.5" cy="5.5" r="5.3" fill="#d24726"/><circle cx="5.5" cy="5.5" r="5.3" fill="url(#pg)"/><defs><radialGradient id="pg" cx="0.35" cy="0.3" r="0.8"><stop offset="0" stop-color="#ff8a60" stop-opacity="0.6"/><stop offset="1" stop-color="#b8341a" stop-opacity="0"/></radialGradient></defs><path d="M3.6 2.8h2.3a1.9 1.9 0 0 1 0 3.8H4.7V8.4H3.6Z M4.7 3.8v1.8h1.1a0.9 0.9 0 0 0 0-1.8Z" fill="#fff" fill-rule="evenodd"/></svg>
<div class="t" id="q53" style="left:183.5px;top:102.00px;height:10px;line-height:10px;font-size:8.2px;color:#e8e8e8;-webkit-text-stroke:0.2px #e8e8e8;transform:scaleX(0.9247);transform-origin:0 0;">Inserir Imagem</div>
<svg class="a" style="left:911.5px;top:102.5px;" width="8" height="8" viewBox="0 0 8 8"><path d="M0.8 0.8L7.2 7.2M7.2 0.8L0.8 7.2" stroke="#d8d8d8" stroke-width="1.1"/></svg>
<svg class="a" style="left:173px;top:128px;" width="11" height="11" viewBox="0 0 11 11"><path d="M9.5 5.5H1.5M5 2L1.5 5.5L5 9" stroke="#dcdcdc" stroke-width="1.3" fill="none" stroke-linecap="round" stroke-linejoin="round"/></svg>
<svg class="a" style="left:195px;top:128px;" width="11" height="11" viewBox="0 0 11 11"><path d="M1.5 5.5H9.5M6 2L9.5 5.5L6 9" stroke="#a0a0a0" stroke-width="1.3" fill="none" stroke-linecap="round" stroke-linejoin="round"/></svg>
<svg class="a" style="left:216.5px;top:130px;" width="8" height="6" viewBox="0 0 8 6"><path d="M1.2 1.5L4 4.3L6.8 1.5" stroke="#dcdcdc" stroke-width="1.3" fill="none" stroke-linecap="round" stroke-linejoin="round"/></svg>
<svg class="a" style="left:234px;top:128px;" width="11" height="11" viewBox="0 0 11 11"><path d="M5.5 10V1.5M2 5L5.5 1.5L9 5" stroke="#dcdcdc" stroke-width="1.3" fill="none" stroke-linecap="round" stroke-linejoin="round"/></svg>
<div class="a" style="left:253px;top:122.2px;width:527px;height:22.3px;background:#1c1c1c;border:1px solid #3c3c3c;border-radius:2px"></div>
<svg class="a" style="left:258.5px;top:128px;" width="11.5" height="9" viewBox="0 0 11.5 9"><path d="M0.5 1.2a0.8 0.8 0 0 1 .8-.8h3.2l1.2 1.3h4.9a.8.8 0 0 1 .8.8v5.8a.8.8 0 0 1-.8.8H1.3a.8.8 0 0 1-.8-.8Z" fill="#f3c94c"/><path d="M0.5 2.6h10.9v5.9a.8.8 0 0 1-.8.8H1.3a.8.8 0 0 1-.8-.8Z" fill="#fbd865"/></svg>
<svg class="a" style="left:273px;top:130px;" width="5" height="6" viewBox="0 0 5 6"><path d="M1.3 1L3.5 3L1.3 5" stroke="#d0d0d0" stroke-width="1" fill="none"/></svg>
<div class="t" id="q54" style="left:282.5px;top:129.10px;height:10px;line-height:10px;font-size:8.2px;color:#e6e6e6;-webkit-text-stroke:0.2px #e6e6e6;transform:scaleX(0.9428);transform-origin:0 0;">Downloads</div>
<svg class="a" style="left:326.5px;top:130px;" width="5" height="6" viewBox="0 0 5 6"><path d="M1.3 1L3.5 3L1.3 5" stroke="#d0d0d0" stroke-width="1" fill="none"/></svg>
<div class="t" id="q55" style="left:335.1px;top:129.10px;height:10px;line-height:10px;font-size:8.2px;color:#e6e6e6;-webkit-text-stroke:0.2px #e6e6e6;transform:scaleX(0.9077);transform-origin:0 0;">Nova pasta</div>
<svg class="a" style="left:740px;top:131px;" width="7" height="5" viewBox="0 0 7 5"><path d="M1 1L3.5 3.5L6 1" stroke="#dcdcdc" stroke-width="1.3" fill="none" stroke-linecap="round" stroke-linejoin="round"/></svg>
<svg class="a" style="left:762px;top:128.5px;" width="10" height="10" viewBox="0 0 10 10"><path d="M8.3 5a3.4 3.4 0 1 1-1-2.5" stroke="#d0d0d0" stroke-width="1.2" fill="none"/><path d="M6 1.2h2.6v2.6" stroke="#d0d0d0" stroke-width="1.2" fill="none"/></svg>
<div class="a" style="left:787.7px;top:122.2px;width:130.3px;height:22.3px;background:#1c1c1c;border:1px solid #3c3c3c;border-radius:2px"></div>
<div class="t" id="q56" style="left:793.4px;top:129.10px;height:10px;line-height:10px;font-size:8.2px;color:#8c8c8c;-webkit-text-stroke:0.2px #8c8c8c;transform:scaleX(0.9067);transform-origin:0 0;">Pesquisar em Nova pasta</div>
<svg class="a" style="left:899.5px;top:128.5px;" width="10" height="10" viewBox="0 0 10 10"><circle cx="6" cy="4" r="2.6" stroke="#cfcfcf" stroke-width="1.1" fill="none"/><path d="M4.1 5.9L1.3 8.7" stroke="#cfcfcf" stroke-width="1.3"/></svg>
<div class="t" id="q57" style="left:176.6px;top:156.90px;height:10px;line-height:10px;font-size:8.2px;color:#e0e0e0;-webkit-text-stroke:0.2px #e0e0e0;transform:scaleX(0.9179);transform-origin:0 0;">Organizar</div>
<svg class="a" style="left:212.5px;top:159.5px;" width="6" height="4" viewBox="0 0 6 4"><path d="M0.5 0.5H5.5L3 3.3Z" fill="#d8d8d8"/></svg>
<div class="t" id="q58" style="left:237.5px;top:156.90px;height:10px;line-height:10px;font-size:8.2px;color:#e0e0e0;-webkit-text-stroke:0.2px #e0e0e0;transform:scaleX(0.9053);transform-origin:0 0;">Nova pasta</div>
<svg class="a" style="left:846px;top:156.5px;" width="12" height="11" viewBox="0 0 12 11"><rect x="0.5" y="0.5" width="11" height="9" rx="1" fill="#e8e8e8"/><rect x="1" y="8" width="10" height="2.5" fill="#9a9a9a"/></svg>
<svg class="a" style="left:863.5px;top:160px;" width="6" height="4" viewBox="0 0 6 4"><path d="M0.5 0.5H5.5L3 3.3Z" fill="#d8d8d8"/></svg>
<svg class="a" style="left:881.5px;top:156px;" width="12" height="11" viewBox="0 0 12 11"><rect x="0.5" y="0.5" width="11" height="10" fill="#f0f0f0" stroke="#c8c8c8" stroke-width="0.6"/><rect x="6.5" y="1" width="4.5" height="9" fill="#1a84d8"/></svg>
<svg class="a" style="left:904.5px;top:155.5px;" width="12" height="12" viewBox="0 0 12 12"><circle cx="6" cy="6" r="5.8" fill="#1a7fd6"/><circle cx="6" cy="6" r="4.8" fill="#2a92ea"/><path d="M4.3 4.6A1.8 1.8 0 1 1 6.6 6.2L6 6.7V7.6" stroke="#fff" stroke-width="1.2" fill="none"/><circle cx="6" cy="9.1" r="0.75" fill="#fff"/></svg>
<div class="a" style="left:322.5px;top:171px;width:2px;height:337px;background:#222222;"></div>
<div class="a" style="left:167px;top:356.3px;width:144.2px;height:20px;background:#2e2e2e;"></div>
<div class="a" style="left:316px;top:288px;width:1.6px;height:110px;background:#9b9b9b;border-radius:1px"></div>
<svg class="a" style="left:196.5px;top:176.1px;" width="12" height="12" viewBox="0 0 12 12"><path d="M0.5 1.2a0.8 0.8 0 0 1 .8-.8h3.2l1.2 1.3h4.9a.8.8 0 0 1 .8.8v5.8a.8.8 0 0 1-.8.8H1.3a.8.8 0 0 1-.8-.8Z" fill="#e9b83a"/><path d="M0.5 2.6h10.9v5.9a.8.8 0 0 1-.8.8H1.3a.8.8 0 0 1-.8-.8Z" fill="#f9d45c"/></svg>
<div class="t" id="q59" style="left:210.5px;top:177.40px;height:10px;line-height:10px;font-size:8.2px;color:#e4e4e4;-webkit-text-stroke:0.2px #e4e4e4;transform:scaleX(0.8939);transform-origin:0 0;">Capa</div>
<svg class="a" style="left:178px;top:198.12px;" width="6" height="8" viewBox="0 0 6 8"><path d="M1.3 1L4 4L1.3 7" stroke="#8a8a8a" stroke-width="1" fill="none"/></svg>
<svg class="a" style="left:191.5px;top:196.62px;" width="12" height="12" viewBox="0 0 12 12"><path d="M2.5 8.5a2.2 2.2 0 0 1-.2-4.4a3.2 3.2 0 0 1 6-0.8a2.6 2.6 0 0 1 1.5 5.2Z" fill="#1d8ae0"/><path d="M2.5 8.5a2.2 2.2 0 0 1 0-3.6h8.6a2.2 2.2 0 0 1-1.3 3.6Z" fill="#0f6cc4"/></svg>
<div class="t" id="q60" style="left:205.5px;top:197.92px;height:10px;line-height:10px;font-size:8.2px;color:#e4e4e4;-webkit-text-stroke:0.2px #e4e4e4;transform:scaleX(0.9127);transform-origin:0 0;">OneDrive - Personal</div>
<svg class="a" style="left:178px;top:218.64px;" width="6" height="8" viewBox="0 0 6 8"><path d="M1.3 1L4 4L1.3 7" stroke="#8a8a8a" stroke-width="1" fill="none"/></svg>
<svg class="a" style="left:191.5px;top:217.14px;" width="12" height="12" viewBox="0 0 12 12"><path d="M2 0.5h5l2.5 2.5v8H2Z" fill="#f5cf5a"/><rect x="5" y="6.5" width="4.5" height="4.5" fill="#e8552a"/></svg>
<div class="t" id="q61" style="left:205.5px;top:218.44px;height:10px;line-height:10px;font-size:8.2px;color:#e4e4e4;-webkit-text-stroke:0.2px #e4e4e4;transform:scaleX(0.9089);transform-origin:0 0;">Creative Cloud Files</div>
<svg class="a" style="left:178px;top:239.16px;" width="6" height="8" viewBox="0 0 6 8"><path d="M1.3 1L4 4L1.3 7" stroke="#8a8a8a" stroke-width="1" fill="none"/></svg>
<svg class="a" style="left:191.5px;top:237.66px;" width="12" height="12" viewBox="0 0 12 12"><rect x="0.5" y="0.5" width="10" height="10" rx="2" fill="#f2f2f2"/><circle cx="4" cy="4" r="2" fill="#f0a030"/><circle cx="7" cy="4" r="2" fill="#e44a5a"/><circle cx="4" cy="7" r="2" fill="#3cb060"/><circle cx="7" cy="7" r="2" fill="#3a8ae0"/></svg>
<div class="t" id="q62" style="left:205.5px;top:238.96px;height:10px;line-height:10px;font-size:8.2px;color:#e4e4e4;-webkit-text-stroke:0.2px #e4e4e4;transform:scaleX(0.9414);transform-origin:0 0;">Fotos do iCloud</div>
<svg class="a" style="left:178px;top:259.68px;" width="6" height="8" viewBox="0 0 6 8"><path d="M1.3 1L4 4L1.3 7" stroke="#8a8a8a" stroke-width="1" fill="none"/></svg>
<svg class="a" style="left:191.5px;top:258.18px;" width="12" height="12" viewBox="0 0 12 12"><rect x="0.5" y="0.5" width="10" height="10" rx="2" fill="#e8eef6"/><path d="M3 8a1.6 1.6 0 0 1-.1-3.2a2.3 2.3 0 0 1 4.3-.5a1.9 1.9 0 0 1 .9 3.7Z" fill="#2f8ae8"/></svg>
<div class="t" id="q63" style="left:205.5px;top:259.48px;height:10px;line-height:10px;font-size:8.2px;color:#e4e4e4;-webkit-text-stroke:0.2px #e4e4e4;transform:scaleX(0.9351);transform-origin:0 0;">iCloud Drive</div>
<svg class="a" style="left:178px;top:280.2px;" width="6" height="8" viewBox="0 0 6 8"><path d="M1.3 1L4 4L1.3 7" stroke="#8a8a8a" stroke-width="1" fill="none"/></svg>
<svg class="a" style="left:191.5px;top:278.7px;" width="12" height="12" viewBox="0 0 12 12"><path d="M0.5 1.2a0.8 0.8 0 0 1 .8-.8h3.2l1.2 1.3h4.9a.8.8 0 0 1 .8.8v5.8a.8.8 0 0 1-.8.8H1.3a.8.8 0 0 1-.8-.8Z" fill="#e9b83a"/><path d="M0.5 2.6h10.9v5.9a.8.8 0 0 1-.8.8H1.3a.8.8 0 0 1-.8-.8Z" fill="#f9d45c"/></svg>
<div class="t" id="q64" style="left:205.5px;top:280.00px;height:10px;line-height:10px;font-size:8.2px;color:#e4e4e4;-webkit-text-stroke:0.2px #e4e4e4;transform:scaleX(0.8893);transform-origin:0 0;">Ana Freire</div>
<svg class="a" style="left:178px;top:300.72px;" width="6" height="8" viewBox="0 0 6 8"><path d="M1.3 1L4 4L1.3 7" stroke="#8a8a8a" stroke-width="1" fill="none"/></svg>
<svg class="a" style="left:191.5px;top:299.22px;" width="12" height="12" viewBox="0 0 12 12"><rect x="0.5" y="1" width="11" height="9" rx="0.5" fill="#2c9ce4"/><rect x="0.5" y="1" width="11" height="4" fill="#5ab8f0"/></svg>
<div class="t" id="q65" style="left:205.5px;top:300.52px;height:10px;line-height:10px;font-size:8.2px;color:#e4e4e4;-webkit-text-stroke:0.2px #e4e4e4;transform:scaleX(0.9072);transform-origin:0 0;">Área de Trabalho</div>
<svg class="a" style="left:178px;top:321.24px;" width="6" height="8" viewBox="0 0 6 8"><path d="M1.3 1L4 4L1.3 7" stroke="#8a8a8a" stroke-width="1" fill="none"/></svg>
<svg class="a" style="left:191.5px;top:319.74px;" width="12" height="12" viewBox="0 0 12 12"><path d="M1.5 0.5h6l2.5 2.5v8.5H1.5Z" fill="#9bb0c8"/><path d="M1.5 0.5h6l2.5 2.5v8.5H1.5Z" fill="none" stroke="#c8d6e4" stroke-width="0.6"/></svg>
<div class="t" id="q66" style="left:205.5px;top:321.04px;height:10px;line-height:10px;font-size:8.2px;color:#e4e4e4;-webkit-text-stroke:0.2px #e4e4e4;transform:scaleX(0.9528);transform-origin:0 0;">Documentos</div>
<svg class="a" style="left:177px;top:342.76px;" width="8" height="6" viewBox="0 0 8 6"><path d="M1 1.3L4 4.3L7 1.3" stroke="#b0b0b0" stroke-width="1" fill="none"/></svg>
<svg class="a" style="left:191.5px;top:340.26px;" width="12" height="12" viewBox="0 0 12 12"><path d="M5.5 0.8v6.4M2.2 4.2L5.5 7.4L8.8 4.2" stroke="#2fb38a" stroke-width="1.3" fill="none"/><path d="M1 9.8H10" stroke="#2fb38a" stroke-width="1.4"/></svg>
<div class="t" id="q67" style="left:205.5px;top:341.56px;height:10px;line-height:10px;font-size:8.2px;color:#e4e4e4;-webkit-text-stroke:0.2px #e4e4e4;transform:scaleX(0.9206);transform-origin:0 0;">Downloads</div>
<svg class="a" style="left:196.5px;top:360.78px;" width="12" height="12" viewBox="0 0 12 12"><path d="M0.5 1.2a0.8 0.8 0 0 1 .8-.8h3.2l1.2 1.3h4.9a.8.8 0 0 1 .8.8v5.8a.8.8 0 0 1-.8.8H1.3a.8.8 0 0 1-.8-.8Z" fill="#e9b83a"/><path d="M0.5 2.6h10.9v5.9a.8.8 0 0 1-.8.8H1.3a.8.8 0 0 1-.8-.8Z" fill="#f9d45c"/></svg>
<div class="t" id="q68" style="left:210.5px;top:362.08px;height:10px;line-height:10px;font-size:8.2px;color:#e4e4e4;-webkit-text-stroke:0.2px #e4e4e4;transform:scaleX(0.9005);transform-origin:0 0;">Nova pasta</div>
<svg class="a" style="left:178px;top:382.79999999999995px;" width="6" height="8" viewBox="0 0 6 8"><path d="M1.3 1L4 4L1.3 7" stroke="#8a8a8a" stroke-width="1" fill="none"/></svg>
<svg class="a" style="left:191.5px;top:381.29999999999995px;" width="12" height="12" viewBox="0 0 12 12"><rect x="0.5" y="0.5" width="10" height="10" rx="0.8" fill="#2a8fe0"/><path d="M0.5 10.5L4 6L6.5 8.5L8 7L10.5 10.5Z" fill="#dfeefa"/><circle cx="7.5" cy="3.3" r="1.2" fill="#e6f2fc"/></svg>
<div class="t" id="q69" style="left:205.5px;top:382.60px;height:10px;line-height:10px;font-size:8.2px;color:#e4e4e4;-webkit-text-stroke:0.2px #e4e4e4;transform:scaleX(0.9298);transform-origin:0 0;">Imagens</div>
<svg class="a" style="left:177px;top:404.32px;" width="8" height="6" viewBox="0 0 8 6"><path d="M1 1.3L4 4.3L7 1.3" stroke="#b0b0b0" stroke-width="1" fill="none"/></svg>
<svg class="a" style="left:191.5px;top:401.82px;" width="12" height="12" viewBox="0 0 12 12"><circle cx="5.5" cy="5.5" r="5.2" fill="#d9706e"/><path d="M5 2.5v5" stroke="#fff" stroke-width="0.9"/><circle cx="4.3" cy="7.5" r="1.1" fill="#fff"/><path d="M5 2.5l2 1" stroke="#fff" stroke-width="0.9"/></svg>
<div class="t" id="q70" style="left:205.5px;top:403.12px;height:10px;line-height:10px;font-size:8.2px;color:#e4e4e4;-webkit-text-stroke:0.2px #e4e4e4;transform:scaleX(0.9224);transform-origin:0 0;">Músicas</div>
<svg class="a" style="left:196.5px;top:422.34000000000003px;" width="12" height="12" viewBox="0 0 12 12"><path d="M0.5 1.2a0.8 0.8 0 0 1 .8-.8h3.2l1.2 1.3h4.9a.8.8 0 0 1 .8.8v5.8a.8.8 0 0 1-.8.8H1.3a.8.8 0 0 1-.8-.8Z" fill="#e9b83a"/><path d="M0.5 2.6h10.9v5.9a.8.8 0 0 1-.8.8H1.3a.8.8 0 0 1-.8-.8Z" fill="#f9d45c"/></svg>
<div class="t" id="q71" style="left:210.5px;top:423.64px;height:10px;line-height:10px;font-size:8.2px;color:#e4e4e4;-webkit-text-stroke:0.2px #e4e4e4;transform:scaleX(0.8924);transform-origin:0 0;">Playlists</div>
<svg class="a" style="left:178px;top:444.36px;" width="6" height="8" viewBox="0 0 6 8"><path d="M1.3 1L4 4L1.3 7" stroke="#8a8a8a" stroke-width="1" fill="none"/></svg>
<svg class="a" style="left:191.5px;top:442.86px;" width="12" height="12" viewBox="0 0 12 12"><rect x="0.5" y="0.5" width="10" height="10" rx="1" fill="#8c54d8"/><path d="M4 3L8 5.5L4 8Z" fill="#f2e8ff"/></svg>
<div class="t" id="q72" style="left:205.5px;top:444.16px;height:10px;line-height:10px;font-size:8.2px;color:#e4e4e4;-webkit-text-stroke:0.2px #e4e4e4;transform:scaleX(0.8941);transform-origin:0 0;">Vídeos</div>
<svg class="a" style="left:178px;top:464.88px;" width="6" height="8" viewBox="0 0 6 8"><path d="M1.3 1L4 4L1.3 7" stroke="#8a8a8a" stroke-width="1" fill="none"/></svg>
<svg class="a" style="left:191.5px;top:463.38px;" width="12" height="12" viewBox="0 0 12 12"><rect x="0.5" y="0.5" width="11" height="7.5" rx="0.6" fill="#2f9de4"/><rect x="0.5" y="0.5" width="11" height="3" fill="#62bcf2"/><path d="M4 10.5h4M6 8v2.5" stroke="#8fb8d8" stroke-width="1"/></svg>
<div class="t" id="q73" style="left:205.5px;top:464.68px;height:10px;line-height:10px;font-size:8.2px;color:#e4e4e4;-webkit-text-stroke:0.2px #e4e4e4;transform:scaleX(0.9291);transform-origin:0 0;">Este Computador</div>
<svg class="a" style="left:178px;top:485.4px;" width="6" height="8" viewBox="0 0 6 8"><path d="M1.3 1L4 4L1.3 7" stroke="#8a8a8a" stroke-width="1" fill="none"/></svg>
<svg class="a" style="left:191.5px;top:483.9px;" width="12" height="12" viewBox="0 0 12 12"><path d="M0.5 1.2a0.8 0.8 0 0 1 .8-.8h3.2l1.2 1.3h4.9a.8.8 0 0 1 .8.8v5.8a.8.8 0 0 1-.8.8H1.3a.8.8 0 0 1-.8-.8Z" fill="#e9b83a"/><path d="M0.5 2.6h10.9v5.9a.8.8 0 0 1-.8.8H1.3a.8.8 0 0 1-.8-.8Z" fill="#f9d45c"/><rect x="0.5" y="7" width="10.9" height="2.3" fill="#3a8fd8"/></svg>
<div class="t" id="q74" style="left:205.5px;top:485.20px;height:10px;line-height:10px;font-size:8.2px;color:#e4e4e4;-webkit-text-stroke:0.2px #e4e4e4;transform:scaleX(0.9341);transform-origin:0 0;">Bibliotecas</div>
<div class="t" id="q75" style="left:205.5px;top:505.50px;height:10px;line-height:10px;font-size:8.2px;color:#d0d0d0;-webkit-text-stroke:0.2px #d0d0d0;transform:scaleX(0.8505);transform-origin:0 0;">REDES</div>
<div class="a" style="left:165px;top:508px;width:760px;height:48px;background:#383838;border-radius:0 0 3px 3px"></div>
<svg class="a" style="left:328.5px;top:181px;" width="7" height="5" viewBox="0 0 7 5"><path d="M1 1L3.5 3.5L6 1" stroke="#bdbdbd" stroke-width="0.9" fill="none"/></svg>
<div class="t" id="q76" style="left:338.6px;top:179.10px;height:10px;line-height:10px;font-size:9px;color:#e8e8e8;-webkit-text-stroke:0.2px #e8e8e8;transform:scaleX(1.0802);transform-origin:0 0;">Hoje</div>
<div class="a" style="left:333.8px;top:192.9px;width:174px;height:177.1px;background:#4e4e4e;"></div>
<svg class="a" style="left:367.4px;top:196.8px;" width="104.3" height="156.5" viewBox="0 0 104.3 156.5">
<defs>
<linearGradient id="sky" x1="0" y1="0" x2="0" y2="1"><stop offset="0" stop-color="#f4f5f3"/><stop offset="0.75" stop-color="#e6e9e6"/><stop offset="1" stop-color="#b8c2bc"/></linearGradient>
<linearGradient id="fl" x1="0" y1="0" x2="1" y2="0"><stop offset="0" stop-color="#0c0f0d"/><stop offset="0.6" stop-color="#141a16"/><stop offset="1" stop-color="#1e2821"/></linearGradient>
<linearGradient id="fr" x1="1" y1="0" x2="0" y2="0"><stop offset="0" stop-color="#0e120f"/><stop offset="0.6" stop-color="#18201a"/><stop offset="1" stop-color="#222c25"/></linearGradient>
<linearGradient id="mid" x1="0" y1="0" x2="0" y2="1"><stop offset="0" stop-color="#5a6a62"/><stop offset="1" stop-color="#1c2420"/></linearGradient>
<linearGradient id="rd" x1="0" y1="0" x2="0" y2="1"><stop offset="0" stop-color="#3e4044"/><stop offset="1" stop-color="#2c2e31"/></linearGradient>
<linearGradient id="yl" x1="0" y1="0" x2="0" y2="1"><stop offset="0" stop-color="#8a6e18"/><stop offset="0.4" stop-color="#b08816"/><stop offset="1" stop-color="#c09418"/></linearGradient>
<filter id="bl" x="-0.2" y="-0.2" width="1.4" height="1.4"><feGaussianBlur stdDeviation="1.1"/></filter>
</defs>
<rect width="104.3" height="156.5" fill="#121613"/>
<g filter="url(#bl)">
<path d="M18.0 0.0 L20.2 1.7 L24.9 3.3 L28.0 5.0 L30.1 7.3 L33.8 9.7 L36.0 12.0 L37.2 16.3 L35.4 20.7 L38.0 25.0 L36.9 29.8 L41.5 34.7 L41.0 39.5 L40.6 43.7 L41.2 47.8 L43.0 52.0 L45.9 57.0 L44.3 62.0 L45.2 67.0 L47.3 71.3 L46.3 75.7 L47.0 80.0 L55.0 80.0 L54.7 75.7 L57.7 71.3 L60.3 67.0 L61.3 63.0 L62.6 59.0 L62.0 55.0 L60.9 49.8 L64.4 44.7 L64.4 39.5 L66.0 35.0 L65.6 30.5 L66.0 26.0 L68.7 21.3 L68.8 16.7 L69.3 12.0 L68.9 8.0 L72.2 4.0 L72.7 0.0Z" fill="url(#sky)"/>
<path d="M0 0 L18.0 0.0 L20.2 1.7 L24.9 3.3 L28.0 5.0 L30.1 7.3 L33.8 9.7 L36.0 12.0 L37.2 16.3 L35.4 20.7 L38.0 25.0 L36.9 29.8 L41.5 34.7 L41.0 39.5 L40.6 43.7 L41.2 47.8 L43.0 52.0 L45.9 57.0 L44.3 62.0 L45.2 67.0 L47.3 71.3 L46.3 75.7 L47.0 80.0 L48 112 H0Z" fill="url(#fl)"/>
<path d="M104.3 0 L72.7 0.0 L72.2 4.0 L68.9 8.0 L69.3 12.0 L68.8 16.7 L68.7 21.3 L66.0 26.0 L65.6 30.5 L66.0 35.0 L64.4 39.5 L64.4 44.7 L60.9 49.8 L62.0 55.0 L62.6 59.0 L61.3 63.0 L60.3 67.0 L57.7 71.3 L54.7 75.7 L55.0 80.0 L56 112 H104.3Z" fill="url(#fr)"/>
<path d="M44 78L50 66L56 76L58 112H44Z" fill="url(#mid)" opacity="0.9"/>
<path d="M0 96H104.3V113H0Z" fill="#0e1110" opacity="0.45"/>
<path d="M0 112H104.3V156.5H0Z" fill="url(#rd)"/>
<path d="M50.6 112L0 135.2V156.5H28.3Z" fill="url(#yl)"/>
<path d="M50.6 112L104.3 131.8V156.5H67.3Z" fill="url(#yl)"/>
<path d="M50.6 112L28.3 156.5H67.3Z" fill="#252527"/>
</g>
</svg>
<div class="t" id="q77" style="left:350.5px;top:359.80px;height:10px;line-height:10px;font-size:8.2px;color:#e8e8e8;-webkit-text-stroke:0.2px #e8e8e8;transform:scaleX(0.9428);transform-origin:0 0;">haroon-ameer-VHoUDgMWRSk-unsplas</div>
<svg class="a" style="left:440px;top:320px;" width="90" height="70" viewBox="0 0 90 70"><path d="M17.6 12.4L46.6 10.3L41.4 18.7L76.7 60.8L26 34.5L20.8 39.8Z" fill="#ff0000"/></svg>
<div class="t" id="q78" style="left:458.2px;top:333.00px;height:22px;line-height:22px;font-size:20.2px;color:#ffffff;-webkit-text-stroke:0.2px #ffffff;font-weight:bold;letter-spacing:-0.3px">10</div>
<div class="t" id="q79" style="left:248.6px;top:516.80px;height:10px;line-height:10px;font-size:8.2px;color:#e8e8e8;-webkit-text-stroke:0.2px #e8e8e8;transform:scaleX(0.9470);transform-origin:0 0;">Nome do arquivo:</div>
<div class="a" style="left:313.1px;top:513.4px;width:472.5px;height:15.4px;background:#383838;border:1px solid #6e6e6e"></div>
<svg class="a" style="left:776.5px;top:518.5px;" width="7" height="5" viewBox="0 0 7 5"><path d="M1 1L3.5 3.5L6 1" stroke="#9a9a9a" stroke-width="0.9" fill="none"/></svg>
<div class="a" style="left:792.8px;top:513.4px;width:121px;height:15.4px;background:#383838;border:1px solid #6e6e6e"></div>
<div class="t" id="q80" style="left:796.3px;top:516.80px;height:10px;line-height:10px;font-size:8.2px;color:#f0f0f0;-webkit-text-stroke:0.2px #f0f0f0;transform:scaleX(0.8893);transform-origin:0 0;">Todas as Imagens</div>
<svg class="a" style="left:904.5px;top:518.5px;" width="7" height="5" viewBox="0 0 7 5"><path d="M1 1L3.5 3.5L6 1" stroke="#b0b0b0" stroke-width="0.9" fill="none"/></svg>
<div class="t" id="q81" style="left:726px;top:535.80px;height:10px;line-height:10px;font-size:8.2px;color:#e8e8e8;-webkit-text-stroke:0.2px #e8e8e8;transform:scaleX(0.9091);transform-origin:0 0;">Ferramentas</div>
<svg class="a" style="left:779px;top:539px;" width="6" height="4" viewBox="0 0 6 4"><path d="M0.3 0.3H5L2.65 3Z" fill="#e0e0e0"/></svg>
<div class="a" style="left:794.2px;top:533.3px;width:55.4px;height:15.2px;background:#333333;border:1px solid #a0a0a0;border-radius:2.5px"></div>
<div class="a" style="left:840px;top:535px;width:1px;height:11.5px;background:#8a8a8a;"></div>
<svg class="a" style="left:842px;top:539px;" width="6" height="4" viewBox="0 0 6 4"><path d="M0.3 0.3H5L2.65 3Z" fill="#e8e8e8"/></svg>
<div class="t" id="q82" style="left:808.2px;top:536.00px;height:10px;line-height:10px;font-size:8.2px;color:#eeeeee;-webkit-text-stroke:0.2px #eeeeee;transform:scaleX(0.9713);transform-origin:0 0;">Abrir</div>
<div class="a" style="left:858.4px;top:533.3px;width:55.4px;height:15.2px;background:#333333;border:1px solid #6a6a6a;border-radius:2.5px"></div>
<div class="t" id="q83" style="left:871.4px;top:536.00px;height:10px;line-height:10px;font-size:8.2px;color:#eeeeee;-webkit-text-stroke:0.2px #eeeeee;transform:scaleX(0.8999);transform-origin:0 0;">Cancelar</div>
<svg class="a" style="left:916px;top:547px;" width="7" height="7" viewBox="0 0 7 7"><rect x="5" y="1" width="1" height="1" fill="#aaa"/><rect x="3" y="3" width="1" height="1" fill="#aaa"/><rect x="5" y="3" width="1" height="1" fill="#aaa"/><rect x="1" y="5" width="1" height="1" fill="#aaa"/><rect x="3" y="5" width="1" height="1" fill="#aaa"/><rect x="5" y="5" width="1" height="1" fill="#aaa"/></svg>
</body></html>
